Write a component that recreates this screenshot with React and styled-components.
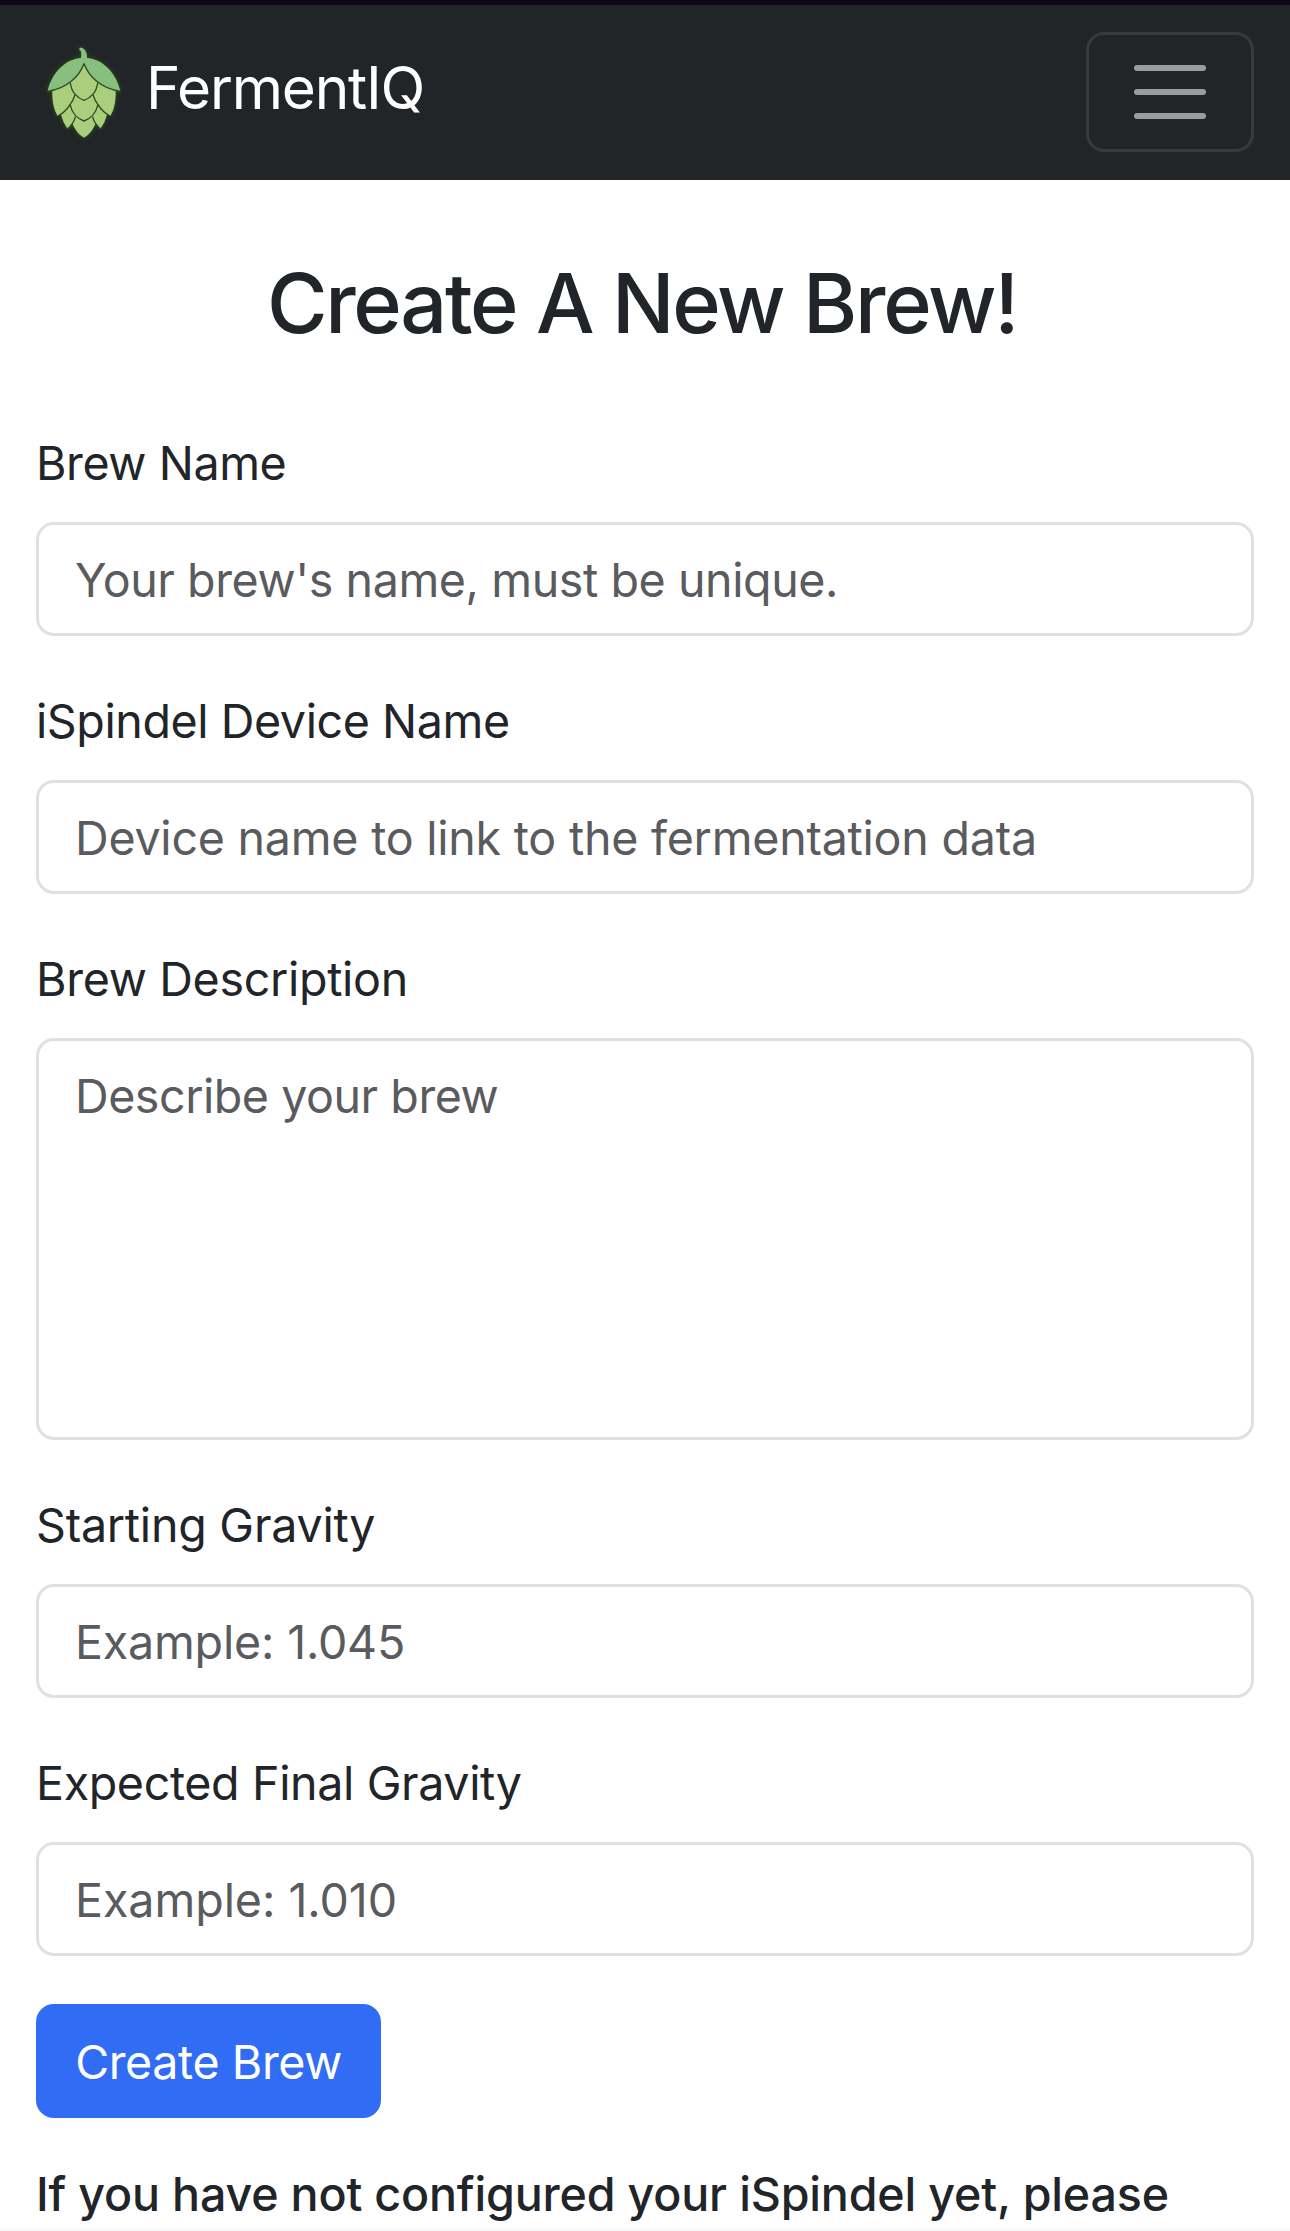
import React from 'react';
import styled, { createGlobalStyle } from 'styled-components';

const font = 'Inter, "Liberation Sans", sans-serif';

const GlobalStyle = createGlobalStyle`
  *, *::before, *::after { box-sizing: border-box; }
  body { margin: 0; background: #fff; color: #212529; font-family: ${font}; }
`;
const Page = styled.div`
  height: 2231px;
  overflow: hidden;
  display: flex;
  flex-direction: column;
`;
const StatusStrip = styled.div`
  flex: none;
  height: 5px;
  background: #0c0818;
`;
const Navbar = styled.header`
  flex: none;
  height: 175px;
  padding: 0 36px 1px;
  display: flex;
  align-items: center;
  justify-content: space-between;
  background: #222528;
`;
const Brand = styled.div`
  display: flex;
  align-items: center;
  gap: 15px;
`;
const HopIcon = styled.svg`
  width: 96px;
  height: 96px;
  filter: drop-shadow(0 0 2px #2c5a16);
`;
const BrandName = styled.span`
  color: #fff;
  font-size: 58.5px;
  line-height: 90px;
  letter-spacing: -1.18px;
  margin: -8px 0 0 -1px;
`;
const Toggler = styled.button`
  width: 168px;
  height: 120px;
  padding: 0 45px;
  display: flex;
  flex-direction: column;
  justify-content: center;
  gap: 18px;
  background: transparent;
  border: 3px solid #373b3e;
  border-radius: 18px;
`;
const Bar = styled.span`
  height: 6px;
  border-radius: 3px;
  background: #9b9c9e;
`;
const Content = styled.main`
  flex: 1;
  min-height: 0;
  overflow: hidden;
  padding: 72px 36px 0;
`;
const Title = styled.h1`
  margin: 0 0 72px;
  padding-right: 6px;
  text-align: center;
  font-size: 82.7px;
  line-height: 102px;
  font-weight: 500;
  letter-spacing: -2.32px;
`;
const Form = styled.form`
  display: flex;
  flex-direction: column;
  align-items: flex-start;
  gap: 48px;
`;
const Field = styled.label`
  width: 100%;
  display: flex;
  flex-direction: column;
  gap: 24px;
`;
const LabelText = styled.span`
  padding-top: 1px;
  margin-bottom: -1px;
  font-size: 46.6px;
  line-height: 72px;
  letter-spacing: ${(p) => p.$track}px;
`;
const Input = styled.input`
  width: 100%;
  height: ${(p) => p.$height || 114}px;
  padding: 19px 36px 17px;
  border: 3px solid #dee1e4;
  border-radius: 18px;
  background: #fff;
  font-family: ${font};
  font-size: 46.6px;
  line-height: 72px;
  letter-spacing: ${(p) => p.$track}px;
  resize: none;
  display: block;
  outline: none;
  &::placeholder { color: #595b5e; opacity: 1; }
`;
const Submit = styled.button`
  width: 345px;
  height: 114px;
  padding: 2px 0 0;
  border: 0;
  border-radius: 18px;
  background: #316cf4;
  color: #fff;
  font-family: ${font};
  font-size: 46.6px;
  line-height: 72px;
  letter-spacing: -0.42px;
`;
const Note = styled.h6`
  margin: 48px 0 0;
  font-size: 46.6px;
  line-height: 57.6px;
  font-weight: 500;
  letter-spacing: -0.18px;
  white-space: nowrap;
`;
const BottomShade = styled.div`
  flex: none;
  height: 4px;
  background: linear-gradient(#fff, #f4f4f4);
`;

const fields = [
  { label: 'Brew Name', labelTrack: -0.42, hint: "Your brew's name, must be unique.", hintTrack: -0.42 },
  { label: 'iSpindel Device Name', labelTrack: -0.42, hint: 'Device name to link to the fermentation data', hintTrack: -0.24 },
  { label: 'Brew Description', labelTrack: -0.31, hint: 'Describe your brew', hintTrack: -0.46, height: 402, as: 'textarea' },
  { label: 'Starting Gravity', labelTrack: -0.24, hint: 'Example: 1.045', hintTrack: -0.2 },
  { label: 'Expected Final Gravity', labelTrack: -0.37, hint: 'Example: 1.010', hintTrack: -0.06 },
];

function Hop() {
  return (
    <HopIcon viewBox="18 27 288 288" aria-hidden="true">
      <path fill="#a9cf7c" d="M67 166C66 200 72 225 83 243L93 238C97 255 104 270 113 281L127 264C134 285 148 300 162 308C176 300 190 285 197 264L211 281C220 270 227 255 231 238L241 243C252 225 258 200 257 166L162 84Z" />
      <path fill="#86bf7e" d="M53 168C65 115 105 72 153 69C154 58 155 48 149 46C146 42 149 37 154 38C166 41 172 54 171 69C219 72 259 115 271 168C240 166 180 138 162 86C144 138 84 166 53 168Z" />
      <g fill="none" stroke="#2b4a25" strokeWidth="4" strokeLinejoin="round">
        <path d="M53 169C112 160 147 125 162 86C177 125 212 160 271 169" />
        <path d="M121 144C124 172 143 190 162 196C181 190 200 172 203 144" />
        <path d="M135 179C131 192 127 201 120 209C126 235 144 252 162 258C180 252 198 235 204 209C197 201 193 192 189 179" />
        <path d="M120 209C112 222 99 235 84 243M204 209C212 222 225 235 240 243" />
        <path d="M136 245C133 260 124 272 113 281M188 245C191 260 200 272 211 281" />
      </g>
    </HopIcon>
  );
}

export default function App() {
  return (
    <Page>
      <GlobalStyle />
      <StatusStrip />
      <Navbar>
        <Brand>
          <Hop />
          <BrandName>FermentIQ</BrandName>
        </Brand>
        <Toggler aria-label="Toggle navigation"><Bar /><Bar /><Bar /></Toggler>
      </Navbar>
      <Content>
        <Title>Create A New Brew!</Title>
        <Form>
          {fields.map((f) => (
            <Field key={f.label}>
              <LabelText $track={f.labelTrack}>{f.label}</LabelText>
              <Input as={f.as} $height={f.height} $track={f.hintTrack} placeholder={f.hint} />
            </Field>
          ))}
          <Submit type="button">Create Brew</Submit>
        </Form>
        <Note>If you have not configured your iSpindel yet, please</Note>
      </Content>
      <BottomShade />
    </Page>
  );
}
